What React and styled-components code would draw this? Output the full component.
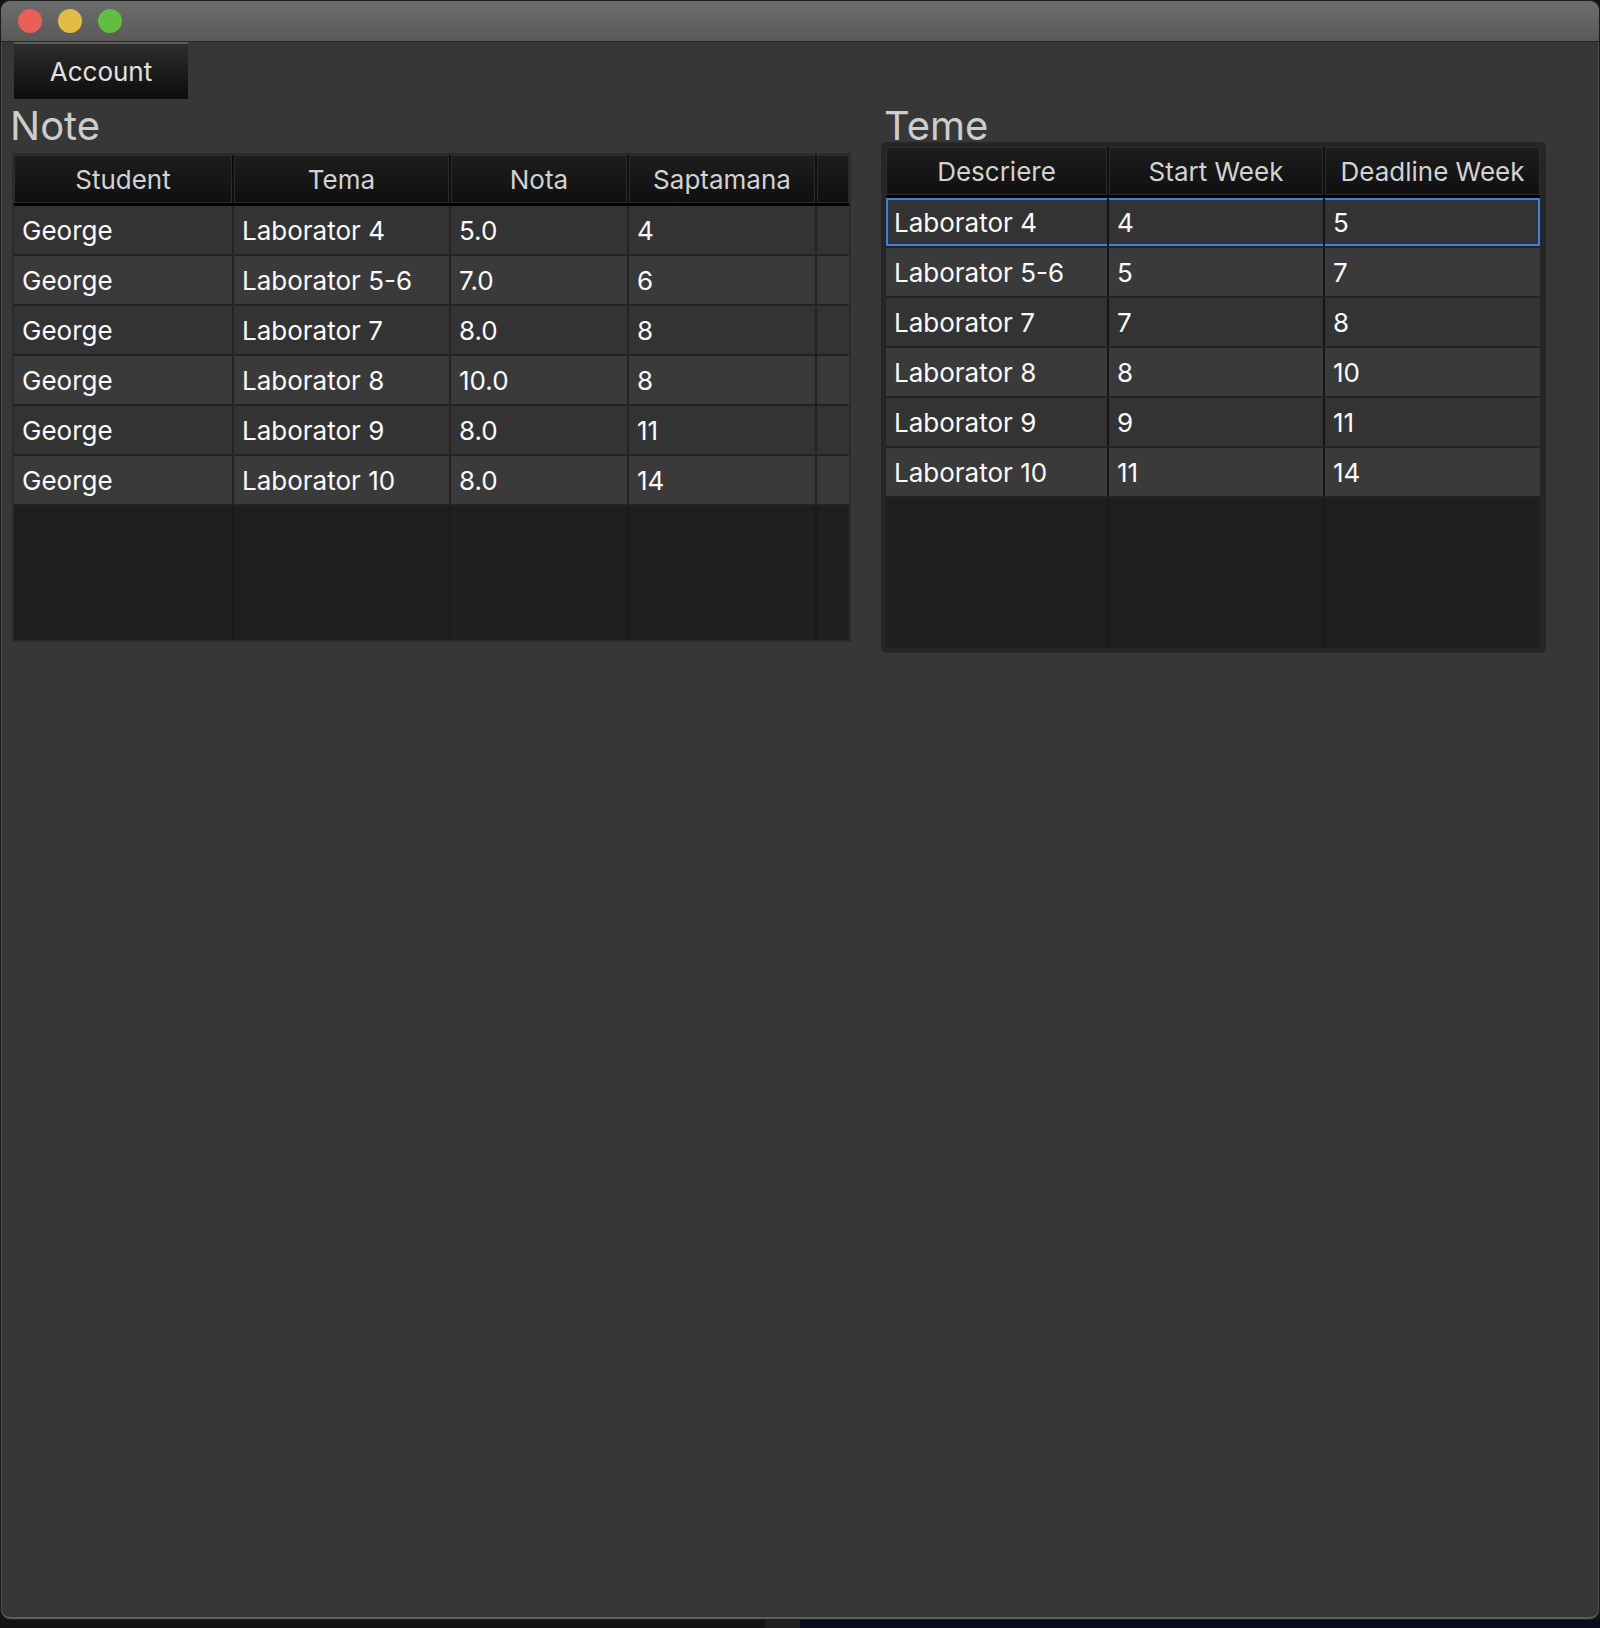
import React from "react";
import styled, { createGlobalStyle } from "styled-components";

const GlobalStyle = createGlobalStyle`
  * { box-sizing: border-box; }
  body {
    margin: 0;
    background: #121212;
    font-family: Inter, "Noto Sans", sans-serif;
  }
`;

const noteRows = [
  ["George", "Laborator 4", "5.0", "4"],
  ["George", "Laborator 5-6", "7.0", "6"],
  ["George", "Laborator 7", "8.0", "8"],
  ["George", "Laborator 8", "10.0", "8"],
  ["George", "Laborator 9", "8.0", "11"],
  ["George", "Laborator 10", "8.0", "14"],
];

const temeRows = [
  ["Laborator 4", "4", "5"],
  ["Laborator 5-6", "5", "7"],
  ["Laborator 7", "7", "8"],
  ["Laborator 8", "8", "10"],
  ["Laborator 9", "9", "11"],
  ["Laborator 10", "11", "14"],
];

const NOTE_COLS = "218px 215px 176px 186px 1fr";
const TEME_COLS = "221px 214px 1fr";

function App() {
  return (
    <>
      <GlobalStyle />
      <Window>
        <TitleBar>
          <Light color="#ec5f57" />
          <Light color="#e1bd45" />
          <Light color="#62bd43" />
        </TitleBar>
        <MenuBar>
          <MenuButton>Account</MenuButton>
        </MenuBar>
        <Main>
          <Column>
            <Label>Note</Label>
            <NoteTable>
              <HeaderRow cols={NOTE_COLS}>
                <HeaderCell>Student</HeaderCell>
                <HeaderCell>Tema</HeaderCell>
                <HeaderCell>Nota</HeaderCell>
                <HeaderCell>Saptamana</HeaderCell>
                <HeaderCell />
              </HeaderRow>
              {noteRows.map((r, i) => (
                <Row key={i} cols={NOTE_COLS} sep="#232323">
                  {r.map((c, j) => (
                    <Cell key={j} even={i % 2 === 1}>{c}</Cell>
                  ))}
                  <Cell even={i % 2 === 1} />
                </Row>
              ))}
              <Filler cols={NOTE_COLS}>
                {[0, 1, 2, 3, 4].map((k) => <EmptyCell key={k} />)}
              </Filler>
            </NoteTable>
          </Column>
          <Column>
            <Label indent>Teme</Label>
            <TemeTable>
              <HeaderRow cols={TEME_COLS}>
                <HeaderCell>Descriere</HeaderCell>
                <HeaderCell>Start Week</HeaderCell>
                <HeaderCell>Deadline Week</HeaderCell>
              </HeaderRow>
              {temeRows.map((r, i) => (
                <Row key={i} cols={TEME_COLS} sep="#151515">
                  {r.map((c, j) => (
                    <Cell
                      key={j}
                      even={i % 2 === 1}
                      focused={i === 0}
                      first={j === 0}
                      last={j === r.length - 1}
                    >
                      {c}
                    </Cell>
                  ))}
                </Row>
              ))}
              <Filler cols={TEME_COLS}>
                {[0, 1, 2].map((k) => <EmptyCell key={k} />)}
              </Filler>
            </TemeTable>
          </Column>
        </Main>
      </Window>
      <Desktop>
        <Strip w="765px" color="#141414" />
        <Strip w="35px" color="#202020" />
        <Strip color="#0a0e1a" />
      </Desktop>
    </>
  );
}

const Window = styled.div`
  width: 1600px;
  height: 1620px;
  display: flex;
  flex-direction: column;
  background: #373737;
  border: 1px solid #1d1d1d;
  border-radius: 10px;
  box-shadow: inset 1px 0 0 #4c4c4c, inset -1px 0 0 #4c4c4c, inset 0 -2px 0 #5e5e5e;
  overflow: hidden;
`;

const TitleBar = styled.div`
  height: 41px;
  flex-shrink: 0;
  display: flex;
  align-items: center;
  gap: 16px;
  padding-left: 17px;
  background: linear-gradient(#6d6d6d, #595959);
  border-bottom: 1px solid #262626;
`;

const Light = styled.span`
  width: 24px;
  height: 24px;
  border-radius: 50%;
  background: ${(p) => p.color};
`;

const MenuBar = styled.div`
  height: 57px;
  flex-shrink: 0;
  display: flex;
  padding-left: 13px;
`;

const MenuButton = styled.div`
  width: 174px;
  height: 57px;
  display: flex;
  align-items: center;
  justify-content: center;
  border-top: 2px solid #5b5b5b;
  background: linear-gradient(#2d2d2d, #0c0c0c);
  color: #e2e2e2;
  font-size: 26px;
`;

const Main = styled.div`
  display: flex;
  align-items: flex-start;
  gap: 30px;
  padding-left: 11px;
`;

const Column = styled.div`
  display: flex;
  flex-direction: column;
`;

const Label = styled.div`
  font-size: 40px;
  line-height: 54px;
  color: #cdcdcd;
  margin-left: ${(p) => (p.indent ? "3px" : "-2px")};
`;

const NoteTable = styled.div`
  width: 839px;
  height: 489px;
  display: flex;
  flex-direction: column;
  border: 2px solid #2b2b2b;
  background: #1f1f1f;
`;

const TemeTable = styled.div`
  width: 665px;
  height: 511px;
  margin-top: -11px;
  display: flex;
  flex-direction: column;
  border: 5px solid #262626;
  border-right-width: 6px;
  border-radius: 5px;
  background: #1f1f1f;
`;

const HeaderRow = styled.div`
  display: grid;
  grid-template-columns: ${(p) => p.cols};
  gap: 2px;
  height: 51px;
  flex-shrink: 0;
  background: #0e0e0e;
  border-bottom: 3px solid #000;
`;

const HeaderCell = styled.div`
  display: flex;
  align-items: center;
  justify-content: center;
  background: linear-gradient(#1d1d1d, #101010);
  border: 1px solid #2c2c2c;
  color: #d2d2d2;
  font-size: 26px;
`;

const Row = styled.div`
  display: grid;
  grid-template-columns: ${(p) => p.cols};
  gap: 2px;
  height: 50px;
  flex-shrink: 0;
  background: ${(p) => p.sep};
  border-bottom: 2px solid #232323;
`;

const blue = "#3d80de";

const Cell = styled.div`
  display: flex;
  align-items: center;
  padding-left: 8px;
  background: ${(p) => (p.even ? "#3a3a3a" : "#333333")};
  color: #fafafa;
  font-size: 26px;
  white-space: nowrap;
  box-shadow: ${(p) =>
    p.focused
      ? [
          `inset 0 2px 0 ${blue}`,
          `inset 0 -2px 0 ${blue}`,
          p.first ? `inset 2px 0 0 ${blue}` : null,
          p.last ? `inset -2px 0 0 ${blue}` : null,
        ]
          .filter(Boolean)
          .join(", ")
      : "none"};
`;

const Filler = styled.div`
  flex: 1;
  display: grid;
  grid-template-columns: ${(p) => p.cols};
  gap: 2px;
  background: #191919;
`;

const EmptyCell = styled.div`
  background: #1f1f1f;
`;

const Desktop = styled.div`
  display: flex;
  height: 8px;
`;

const Strip = styled.div`
  width: ${(p) => p.w || "auto"};
  flex: ${(p) => (p.w ? "none" : 1)};
  background: ${(p) => p.color};
`;

export default App;
